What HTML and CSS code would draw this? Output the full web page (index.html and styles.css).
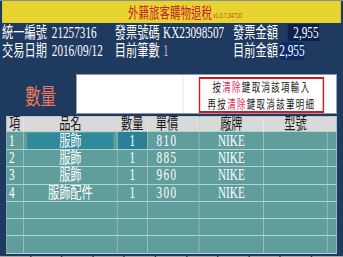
FILE: index.html
```html
<!DOCTYPE html>
<html lang="zh-Hant">
<head>
  <meta charset="UTF-8" />
  <meta name="viewport" content="width=device-width, initial-scale=1.0"/>
  <title>外籍旅客購物退稅</title>
  <link rel="stylesheet" href="styles.css">
</head>
<body>
  <div class="screen">
    <header class="titlebar">
      <h1>外籍旅客購物退稅<small>v1.0.7.34710</small></h1>
    </header>

    <div class="info">
      <span>統一編號</span><span>21257316</span>
      <span>發票號碼</span><span>KX23098507</span>
      <span>發票金額</span><span class="amount-box">2,955</span>

      <span>交易日期</span><span>2016/09/12</span>
      <span>目前筆數</span><span class="count">1</span>
      <span>目前金額</span><span class="amount-now">2,955</span>
    </div>

    <div class="qty">
      <span class="qty-label">數量</span>
      <div class="qty-input">
        <div class="qty-field"></div>
        <div class="qty-hint">
          <p>按<em>清除</em>鍵取消該項輸入</p>
          <p>再按<em>清除</em>鍵取消該筆明細</p>
        </div>
      </div>
    </div>

    <table class="items">
      <colgroup>
        <col style="width:24px">
        <col style="width:134px">
        <col style="width:43px">
        <col style="width:74px">
        <col style="width:92px">
        <col style="width:91px">
        <col style="width:13px">
      </colgroup>
      <thead>
        <tr><th class="no">項</th><th>品名</th><th>數量</th><th class="price">單價</th><th>廠牌</th><th>型號</th><th></th></tr>
      </thead>
      <tbody>
        <tr><td class="no">1</td><td><span class="sel">服飾</span></td><td class="active">1</td><td class="price">810</td><td>NIKE</td><td></td><td></td></tr>
        <tr><td class="no">2</td><td>服飾</td><td>1</td><td class="price">885</td><td>NIKE</td><td></td><td></td></tr>
        <tr><td class="no">3</td><td>服飾</td><td>1</td><td class="price">960</td><td>NIKE</td><td></td><td></td></tr>
        <tr><td class="no">4</td><td>服飾配件</td><td>1</td><td class="price">300</td><td>NIKE</td><td></td><td></td></tr>
        <tr><td></td><td></td><td></td><td></td><td></td><td></td><td></td></tr>
        <tr><td></td><td></td><td></td><td></td><td></td><td></td><td></td></tr>
        <tr><td></td><td></td><td></td><td></td><td></td><td></td><td></td></tr>
      </tbody>
    </table>

    <div class="statusbar">
      <span></span><span></span><span></span><span></span><span></span><span></span>
      <span></span><span></span><span></span><span></span>
    </div>
  </div>
</body>
</html>
```

FILE: styles.css
```css
/* Kiosk screen, drawn wide then squeezed to fit the window */
* {
  box-sizing: border-box;
}

html {
  overflow: hidden;
}

body {
  margin: 0;
  width: 343px;
  height: 257px;
  overflow: clip;
  background: #1e3a5f;
  color: #fff;
  font-family: "Liberation Serif", "Noto Sans CJK TC", serif;
}

.screen {
  width: 490px;
  height: 257px;
  border-top: 1px solid #8a8f96;
  transform: scaleX(0.7);
  transform-origin: 0 0;
}

/* Title bar */
.titlebar {
  height: 22px;
  margin: 0 3px;
  background: #e8d430;
  text-align: center;
}

.titlebar h1 {
  margin: 0;
  padding-left: 38px;
  font-family: "Noto Sans CJK TC", sans-serif;
  font-size: 15px;
  font-weight: normal;
  line-height: 22px;
  color: #c8202a;
}

.titlebar small {
  margin-left: 2px;
  font-family: "Liberation Sans", sans-serif;
  font-size: 7px;
  color: #b8401e;
}

/* Invoice info */
.info {
  display: grid;
  grid-template-columns: 71px 90px 69px 100px 66px 1fr;
  grid-auto-rows: 18px;
  margin: 1px 0 0 3px;
  font-size: 16px;
  line-height: 18px;
}

.amount-box {
  width: 45px;
  height: 17px;
  margin-left: 12px;
  padding-left: 8px;
  background: #0c2050;
  line-height: 17px;
}

.count {
  color: #d8a0e0;
}

.amount-now {
  width: 36px;
  background: #0a2a68;
  border-radius: 5px;
}

/* Quantity entry */
.qty {
  display: flex;
  align-items: center;
  height: 40px;
  margin-top: 14px;
}

.qty-label {
  width: 109px;
  padding-left: 36px;
  font-family: "Noto Sans CJK TC", sans-serif;
  font-size: 22px;
  color: #e8795a;
}

.qty-input {
  display: flex;
  align-items: flex-start;
  width: 372px;
  height: 40px;
  background: #fff;
  border: 1px solid #8a9aa8;
}

.qty-field {
  width: 152px;
  height: 100%;
  border-right: 1px solid #d8dde2;
}

.qty-hint {
  display: flex;
  flex-direction: column;
  justify-content: center;
  width: 179px;
  height: 36px;
  margin: 2px 0 0 22px;
  border: 2px solid #e0141e;
  text-align: center;
  color: #222;
  font-family: "Noto Sans CJK TC", sans-serif;
  font-size: 12px;
  letter-spacing: 2px;
  line-height: 17px;
}

.qty-hint p {
  margin: 0;
}

.qty-hint em {
  font-style: normal;
  color: #e0305a;
}

/* Item list */
.items {
  width: 471px;
  margin: 2px 0 0 9px;
  border-collapse: collapse;
  table-layout: fixed;
  border: 1px solid #b9cccc;
  font-size: 16px;
}

.items th {
  height: 14px;
  padding: 0;
  background: #d9d9d9;
  border-left: 1px solid #f2f2f2;
  color: #1a1a1a;
  font-weight: normal;
  line-height: 14px;
  white-space: nowrap;
}

.items tbody tr {
  height: 17.3px;
}

.items td {
  padding: 0;
  background: #5f9e9c;
  border: 1px solid #b0d4d2;
  text-align: center;
  line-height: 16px;
  white-space: nowrap;
}

.items .no {
  padding-left: 3px;
  text-align: left;
}

.items .price {
  padding-right: 18px;
}

.items td.price {
  letter-spacing: 2px;
}

.items td.active {
  background: #2b7f96;
}

.items .sel {
  display: block;
  margin: 1px 5px 0;
  background: #2f8a9b;
}

/* Bottom status strip */
.statusbar {
  display: flex;
  height: 4px;
  margin-top: 2px;
  overflow: hidden;
  background: #a9a9a9;
}

.statusbar span {
  flex: 0 0 44.6px;
  border-right: 2px solid #3a3a3a;
}
```
